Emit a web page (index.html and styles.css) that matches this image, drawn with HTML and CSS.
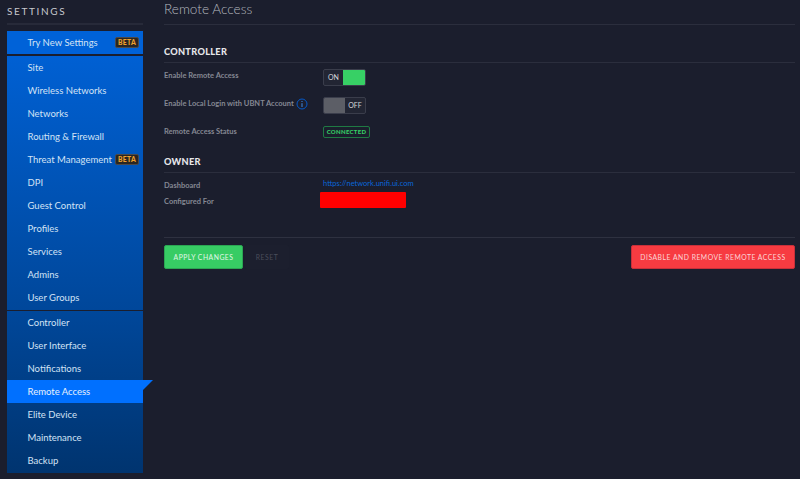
FILE: index.html
```html
<!DOCTYPE html>
<html lang="en">
<head>
<meta charset="utf-8">
<title>Remote Access</title>
<link rel="stylesheet" href="styles.css">
</head>
<body>
<div class="app">
  <aside class="sidebar">
    <h1 class="side-title">SETTINGS</h1>
    <nav class="nav">
      <ul class="group group-a">
        <li class="item">Try New Settings<span class="beta">BETA</span></li>
      </ul>
      <ul class="group group-b">
        <li class="item">Site</li>
        <li class="item">Wireless Networks</li>
        <li class="item">Networks</li>
        <li class="item">Routing &amp; Firewall</li>
        <li class="item">Threat Management<span class="beta">BETA</span></li>
        <li class="item">DPI</li>
        <li class="item">Guest Control</li>
        <li class="item">Profiles</li>
        <li class="item">Services</li>
        <li class="item">Admins</li>
        <li class="item">User Groups</li>
      </ul>
      <ul class="group group-c">
        <li class="item">Controller</li>
        <li class="item">User Interface</li>
        <li class="item">Notifications</li>
        <li class="item active">Remote Access</li>
        <li class="item">Elite Device</li>
        <li class="item">Maintenance</li>
        <li class="item">Backup</li>
      </ul>
    </nav>
  </aside>
  <main class="main">
    <h2 class="page-title">Remote Access</h2>
    <section class="sec sec-controller">
      <h3 class="sec-title">CONTROLLER</h3>
      <div class="row row-a">
        <span class="label">Enable Remote Access</span>
        <div class="toggle"><span class="t-text">ON</span><span class="t-on"></span></div>
      </div>
      <div class="row row-b">
        <span class="label">Enable Local Login with UBNT Account<svg class="info" width="12" height="12" viewBox="0 0 12 12"><circle cx="6" cy="6" r="5" fill="none" stroke="#0559c9" stroke-width="1"/><path d="M6 3v1M6 5.2V9" stroke="#3f8ae6" stroke-width="1" fill="none"/></svg></span>
        <div class="toggle"><span class="t-off"></span><span class="t-text">OFF</span></div>
      </div>
      <div class="row row-c">
        <span class="label">Remote Access Status</span>
        <span class="status">CONNECTED</span>
      </div>
    </section>
    <section class="sec sec-owner">
      <h3 class="sec-title">OWNER</h3>
      <div class="row row-d">
        <span class="label">Dashboard</span>
        <a class="link" href="#">https://network.unifi.ui.com</a>
      </div>
      <div class="row row-e">
        <span class="label">Configured For</span>
        <span class="redact"></span>
      </div>
    </section>
    <div class="actions">
      <button class="btn btn-apply">APPLY CHANGES</button>
      <button class="btn btn-reset">RESET</button>
      <button class="btn btn-danger">DISABLE AND REMOVE REMOTE ACCESS</button>
    </div>
  </main>
</div>
</body>
</html>
```

FILE: styles.css
```css
* { box-sizing: border-box; margin: 0; padding: 0; }
html, body { height: 100%; }
body {
  background: #1b1e2d;
  font-family: Lato, "Liberation Sans", sans-serif;
  color: #c9ccd4;
  overflow: hidden;
}
.app { display: flex; height: 479px; }
.sidebar { width: 143px; margin-right: 21px; padding-left: 7px; flex: none; }
.side-title {
  font-size: 10px; font-weight: 400; letter-spacing: 1.65px; color: #c6c8ce;
  line-height: 14px; padding-top: 4px; height: 25px; margin-bottom: 6px;
  border-bottom: 2px solid #272a39;
}
.nav { display: flex; flex-direction: column; }
.group { list-style: none; }
.group-a { background: #0062d8; margin-bottom: 2px; }
.group-b { background: linear-gradient(#0060d3, #00479a); margin-bottom: 1px; height: 254px; }
.group-c { background: linear-gradient(#00479a, #00346f); height: 162px; }
.item {
  height: 23px; font-size: 9.5px; color: #d3e2f5; white-space: nowrap;
  padding: 0 4px 1px 20.5px;
  display: flex; justify-content: space-between; align-items: center;
  position: relative;
}
.active { background: #0070ff; color: #e6f0fd; }
.active::after {
  content: ""; position: absolute; left: 100%; top: 0;
  border-top: 10px solid #0070ff; border-right: 10px solid transparent;
}
.beta {
  font-size: 6.8px; font-weight: 900; letter-spacing: .35px; color: #f0a22e;
  background: #2a2622; border: 1px solid #4c4a4a; border-radius: 2px;
  width: 24px; height: 11px; line-height: 9px; text-align: center;
}
.main { flex: 1; padding-right: 5px; min-width: 0; }
.page-title {
  font-size: 13.6px; font-weight: 300; color: #b4b7bf; height: 25px; line-height: 18px;
  border-bottom: 1px solid #2b2e3d;
}
.sec-title {
  font-size: 9.2px; font-weight: 900; letter-spacing: .3px; color: #e6e7ea;
  height: 19px; line-height: 15px; border-bottom: 1px solid #2b2e3d;
}
.sec-controller { padding-top: 19px; }
.sec-owner { padding-top: 10px; }
.row { display: flex; align-items: center; }
.row-a { height: 25px; }
.row-b { height: 31px; }
.row-c { height: 25px; }
.row-d { height: 16px; margin-top: 4px; }
.row-e { height: 16px; }
.label {
  width: 159px; flex: none; font-size: 7.5px; font-weight: 700; color: #858893;
  white-space: nowrap; display: flex; align-items: center;
}
.info { margin-left: 2px; flex: none; }
.toggle {
  width: 43px; height: 17px; display: flex; align-items: stretch; margin-top: 4px;
  background: #222533; border: 1px solid #3a3d4b; border-radius: 2px; overflow: hidden;
}
.t-text { flex: 1; text-align: center; font-size: 7px; line-height: 15px; color: #d6d8dd; }
.t-on { width: 22px; background: #37d065; }
.t-off { width: 21px; background: #5c5e66; }
.status {
  font-size: 6px; font-weight: 900; letter-spacing: .3px; color: #37d065;
  border: 1px solid #1f7a43; border-radius: 2px; height: 12px; line-height: 9px;
  width: 47px; white-space: nowrap; text-align: center;
}
.link { font-size: 7.5px; color: #0a66d8; text-decoration: none; position: relative; top: -2px; }
.redact {
  width: 86px; height: 16px; background: #ff0000; border-radius: 1px;
  margin-left: -3px; position: relative; top: -1px;
}
.actions {
  margin-top: 28px; padding-top: 7px; border-top: 1px solid #2e3140;
  display: flex; align-items: center;
}
.btn {
  font-family: inherit; font-size: 6.8px; letter-spacing: .5px; height: 24px;
  border-radius: 2px; border: 1px solid transparent; cursor: pointer;
}
.btn-apply { width: 79px; background: #37cc64; border-color: #2ba653; color: #e2f7e8; }
.btn-reset { width: 44px; margin-left: 2px; background: #1c1f2e; color: #4a4d5a; }
.btn-danger { margin-left: auto; width: 164px; background: #f73b41; border-color: #c7303a; color: #fbd5d7; }
```
